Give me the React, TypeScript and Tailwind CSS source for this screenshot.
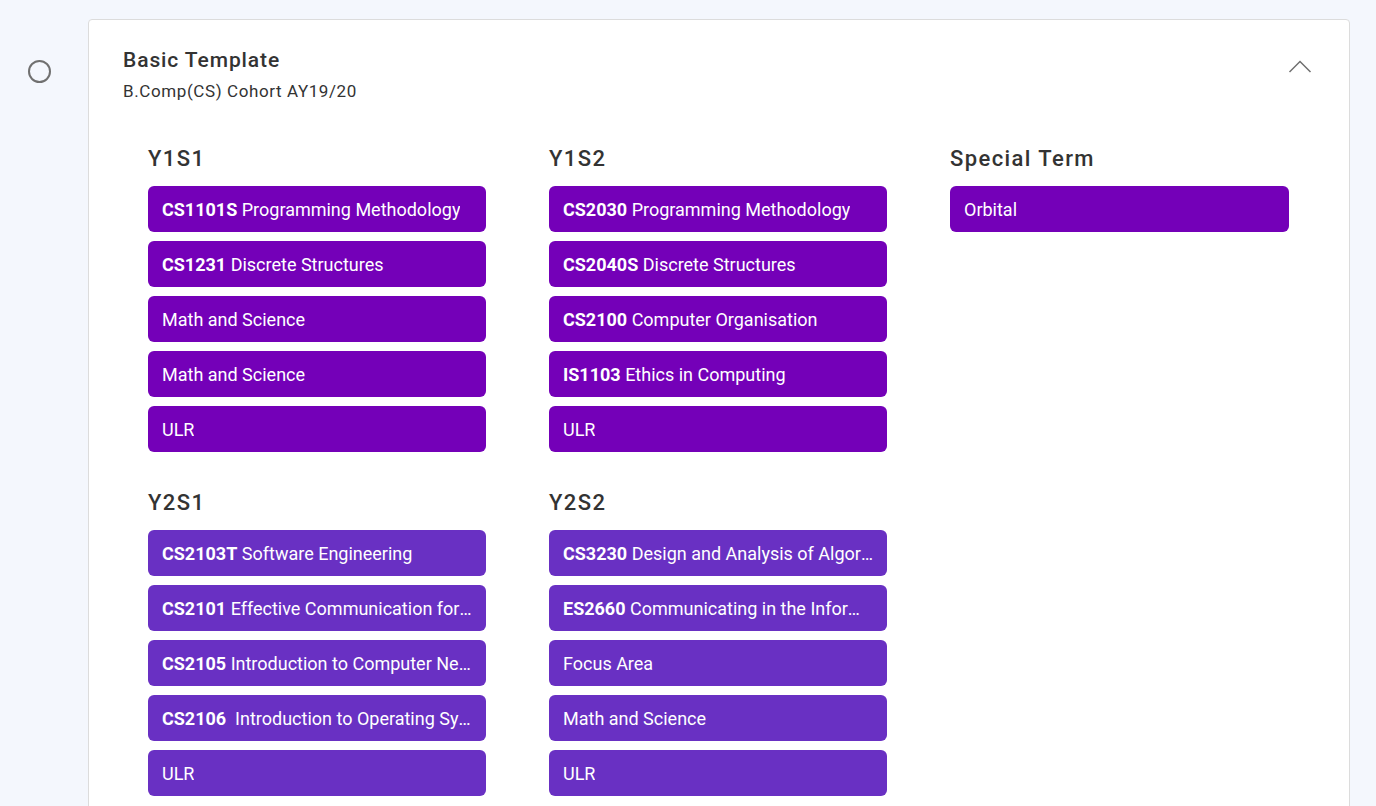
import React from 'react';

type Mod = { code?: string; title: string };

const terms: { name: string; color: string; mods: Mod[] }[] = [
  {
    name: 'Y1S1',
    color: 'bg-[#7400b8]',
    mods: [
      { code: 'CS1101S', title: 'Programming Methodology' },
      { code: 'CS1231', title: 'Discrete Structures' },
      { title: 'Math and Science' },
      { title: 'Math and Science' },
      { title: 'ULR' },
    ],
  },
  {
    name: 'Y1S2',
    color: 'bg-[#7400b8]',
    mods: [
      { code: 'CS2030', title: 'Programming Methodology' },
      { code: 'CS2040S', title: 'Discrete Structures' },
      { code: 'CS2100', title: 'Computer Organisation' },
      { code: 'IS1103', title: 'Ethics in Computing' },
      { title: 'ULR' },
    ],
  },
  {
    name: 'Special Term',
    color: 'bg-[#7400b8]',
    mods: [{ title: 'Orbital' }],
  },
  {
    name: 'Y2S1',
    color: 'bg-[#6930c3]',
    mods: [
      { code: 'CS2103T', title: 'Software Engineering' },
      { code: 'CS2101', title: 'Effective Communication for Computing Professionals' },
      { code: 'CS2105', title: 'Introduction to Computer Networks' },
      { code: 'CS2106', title: '\u00a0Introduction to Operating Systems' },
      { title: 'ULR' },
    ],
  },
  {
    name: 'Y2S2',
    color: 'bg-[#6930c3]',
    mods: [
      { code: 'CS3230', title: 'Design and Analysis of Algorithms' },
      { code: 'ES2660', title: 'Communicating in the Information Age' },
      { title: 'Focus Area' },
      { title: 'Math and Science' },
      { title: 'ULR' },
    ],
  },
];

const App: React.FC = () => {
  return (
    <div className="min-h-screen bg-[#f4f7fd] flex items-start pt-[19px] font-['Roboto',sans-serif]">
      {/* Radio */}
      <div className="w-[88px] shrink-0 pl-[28px] pt-[41px]">
        <div className="w-[23px] h-[23px] rounded-full border-2 border-[#707070]" />
      </div>

      {/* Card */}
      <div className="w-[1262px] bg-white border border-[#dcdcdc] rounded-[4px] pb-10">
        {/* Header */}
        <div className="flex items-start justify-between pl-[34px] pr-[37px] pt-[26px]">
          <div>
            <h1 className="text-[21px] leading-[28px] font-medium tracking-[0.9px] text-[#333]">Basic Template</h1>
            <p className="text-[17px] leading-[24px] tracking-[0.6px] text-[#333] mt-[5px]">B.Comp(CS) Cohort AY19/20</p>
          </div>
          <svg width="24" height="16" viewBox="0 0 24 16" className="mt-[12px]">
            <path d="M1.5 14 L12 3.5 L22.5 14" fill="none" stroke="#707070" strokeWidth="1.5" />
          </svg>
        </div>

        {/* Terms */}
        <div className="grid grid-cols-[338px_338px_339px] gap-x-[63px] gap-y-[37px] pl-[59px] pt-[42px]">
          {terms.map((t) => (
            <div key={t.name}>
              <h2 className="text-[22px] leading-[28px] font-medium tracking-[1.4px] text-[#333] mb-[13px]">{t.name}</h2>
              <div className="flex flex-col gap-[9px]">
                {t.mods.map((m, i) => (
                  <div
                    key={i}
                    className={`${t.color} h-[46px] rounded-[6px] px-[14px] flex items-center text-white text-[18px]`}
                  >
                    <span className="truncate">
                      {m.code && <span className="font-bold">{m.code}</span>}
                      {m.code ? ' ' : ''}
                      {m.title}
                    </span>
                  </div>
                ))}
              </div>
            </div>
          ))}
        </div>
      </div>
    </div>
  );
};

export default App;
